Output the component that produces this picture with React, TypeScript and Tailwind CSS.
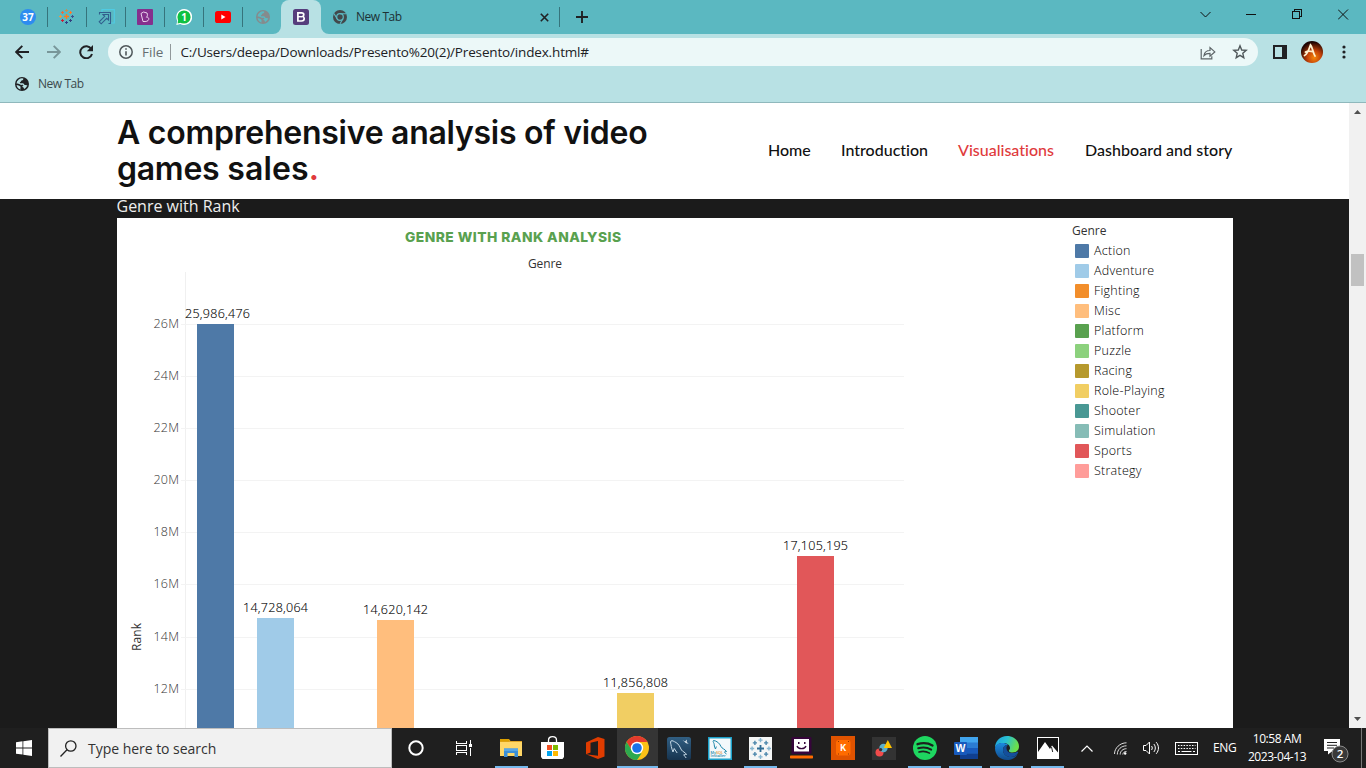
import type { ReactNode } from "react";

const UI = "font-['Open_Sans','Noto_Sans',sans-serif]";

/* ---------- browser icons ---------- */

const Globe = ({ color, bg }: { color: string; bg: string }) => (
  <svg width="14" height="14" viewBox="0 0 14 14">
    <circle cx="7" cy="7" r="7" fill={color} />
    <path d="M8.300 1.500c.2 1.300-.6 1.900-1.600 2.100-.9.2-.5 1.300-1.300 1.400-.7.1-.6.900-.3 1.200h2.600c1.300 0 1.200 1.700 2.300 1.700 1.300 0 1.600.5 2.300.2-.3 1.700-1.500 3.200-3.200 3.900-.5-.8-.2-1.600-1.100-1.700-.8-.1-.8-1.400 0-1.500.8-.2.5-.9-.4-1-.9 0-1.600.3-2.500-.2-1.300-.7-2-.9-3.600-1A5.600 5.600 0 0 1 8.300 1.500z" fill={bg} />
    <path d="M1.600 8c1.400 0 2.300.8 3.300 1.200.8.3.9 1.100.5 1.600-.3.400.2.900.4 1.700C3.500 12 1.800 10.200 1.600 8z" fill={bg} />
  </svg>
);

const MARK_POINTS: [number, number, number][] = [
  [7.5, 7.5, 2.5], [3.5, 3.5, 1.5], [11.5, 3.5, 1.5], [11.5, 11.5, 1.5], [3.5, 11.5, 1.5],
  [7.5, 1.5, 1.5], [13.5, 7.5, 1.5], [7.5, 13.5, 1.5], [1.5, 7.5, 1.5],
];
const MARK_COLOR = ["#ff7a1a", "#ef6a3a", "#ff7a2a", "#34407e", "#cc1f36", "#c98f50", "#41508c", "#2f3f86", "#f0983a"];
const MARK_MONO = ["#2f6d95", "#4a86ab", "#4a86ab", "#4a86ab", "#4a86ab", "#85b5cf", "#85b5cf", "#85b5cf", "#85b5cf"];

const TableauMark = ({ mono = false }: { mono?: boolean }) => (
  <svg width={mono ? 21 : 16} height={mono ? 21 : 16} viewBox={mono ? "0 0 15 15" : "0 0 16 16"}>
    {MARK_POINTS.map(([x, y, r], i) => (
      <path key={i} d={`M${x - r} ${y}H${x + r}M${x} ${y - r}V${y + r}`} stroke={(mono ? MARK_MONO : MARK_COLOR)[i]} strokeWidth={i === 0 ? 1.3 : 1} />
    ))}
  </svg>
);

const ChromeGray = () => (
  <svg width="14" height="14" viewBox="0 0 14 14">
    <circle cx="7" cy="7" r="7" fill="#42484b" />
    <circle cx="7" cy="7" r="3.300" fill="none" stroke="#5bb8c1" strokeWidth="1.200" />
    <path d="M7 3.700h6.200M4.100 8.700L1 3.600M9.900 8.700L7 13.800" stroke="#5bb8c1" strokeWidth="1.100" />
  </svg>
);

const pinned: ReactNode[] = [
  <svg width="16" height="16" viewBox="0 0 16 16">
    <circle cx="8" cy="8" r="8" fill="#2d8cf0" />
    <text x="8" y="11.500" fontSize="10" fontWeight="700" fill="#fff" textAnchor="middle" fontFamily="Open Sans">37</text>
  </svg>,
  <TableauMark />,
  <svg width="17" height="16" viewBox="0 0 17 16" fill="none">
    <path d="M4 3V.7h12.300v13.300H13" stroke="#4fcbe3" strokeWidth="1.200" />
    <path d="M1.500 5.500v-2h11v11h-2" stroke="#315f8d" strokeWidth="1.100" />
    <path d="M5 5.500h5.500V11L8.700 9.300l-5.500 5.500-2-2 5.500-5.500z" stroke="#315f8d" strokeWidth="1.100" />
  </svg>,
  <svg width="16" height="16" viewBox="0 0 16 16" fill="none">
    <rect width="16" height="16" rx="1" fill="#85308d" />
    <path d="M4 4.500L6 12.500c3 .3 5.200-.3 5.700-2 .4-1.500-.8-2.500-2.300-2.300 1.200-.9 1.300-2.700.6-4.200L6.500 3z" stroke="#ead3ee" strokeWidth="1" strokeLinejoin="round" />
  </svg>,
  <svg width="16" height="16" viewBox="0 0 16 16">
    <path d="M8 0a8 8 0 1 1-3.700 15L.3 16l1-4A8 8 0 0 1 8 0z" fill="#fff" />
    <circle cx="8" cy="8" r="6.600" fill="#0fc143" />
    <path d="M2.300 10.500L1.600 14.500l4-1z" fill="#0fc143" />
    <text x="8" y="11.600" fontSize="10" fontWeight="700" fill="#fff" textAnchor="middle" fontFamily="Open Sans">1</text>
  </svg>,
  <svg width="16" height="12" viewBox="0 0 16 12">
    <rect width="16" height="12" rx="2.600" fill="#f00" />
    <path d="M6.300 3.500v5L10.500 6z" fill="#fff" />
  </svg>,
  <Globe color="#858b8d" bg="#5bb8c1" />,
];

const TabStrip = () => (
  <div className="flex h-[34px] items-center bg-[#5bb8c1] pl-[9px]">
    {pinned.map((icon, i) => (
      <div key={i} className={`flex h-5 w-[39px] shrink-0 items-center justify-center ${i < 6 ? "border-r border-[#36747c]" : ""}`}>{icon}</div>
    ))}
    <div className="relative -ml-px flex h-[34px] w-10 items-center justify-center rounded-t-lg bg-[#b8e1e4]">
      <svg className="absolute bottom-0 -left-2" width="8" height="8"><path d="M8 0v8H0a8 8 0 0 0 8-8z" fill="#b8e1e4" /></svg>
      <svg className="absolute -right-2 bottom-0" width="8" height="8"><path d="M0 0v8h8a8 8 0 0 1-8-8z" fill="#b8e1e4" /></svg>
      <svg width="16" height="16" viewBox="0 0 16 16">
        <rect width="16" height="16" rx="2.500" fill="#563d7c" />
        <path d="M4.900 3.800h3.700c1.500 0 2.200.7 2.200 1.900 0 .9-.5 1.500-1.200 1.800 1 .2 1.600 1 1.600 2.100 0 1.500-1 2.400-2.700 2.400H4.900z" fill="none" stroke="#fff" strokeWidth="1.700" />
        <path d="M5 7.700h4" stroke="#fff" strokeWidth="1.400" />
      </svg>
    </div>
    <div className="flex h-5 w-[239px] items-center border-r border-[#36747c] pl-3">
      <ChromeGray />
      <span className={`${UI} ml-[9px] flex-1 text-[12px] tracking-[-0.45px] text-[#1d3135]`}>New Tab</span>
      <svg className="mr-[10px]" width="9" height="9" viewBox="0 0 9 9"><path d="M.8.8l7.400 7.400M8.200.8L.8 8.200" stroke="#202124" strokeWidth="1.600" /></svg>
    </div>
    <svg className="ml-[16px]" width="12" height="12" viewBox="0 0 12 12"><path d="M6 0v12M0 6h12" stroke="#202124" strokeWidth="1.900" /></svg>
    <div className="ml-auto flex h-[34px] pb-[6px]">
      <WinBtn><path d="M.5 3L5.500 8l5-5" /></WinBtn>
      <WinBtn><path d="M0 5.500h10" shapeRendering="crispEdges" /></WinBtn>
      <WinBtn><path d="M.5 2.500h7v7h-7zM2.500 2.500V.5h7v7H7.500" shapeRendering="crispEdges" /></WinBtn>
      <WinBtn><path d="M0 .5l10 10M10 .5l-10 10" /></WinBtn>
    </div>
  </div>
);

const WinBtn = ({ children }: { children: ReactNode }) => (
  <div className="flex w-[46px] items-center justify-center">
    <svg width="11" height="11" viewBox="0 0 11 11" fill="none" stroke="#111" strokeWidth="1">{children}</svg>
  </div>
);

const Toolbar = () => (
  <div className="flex h-9 items-center bg-[#b8e1e4] pl-[15px]">
    <svg width="14" height="14" viewBox="0 0 14 14" fill="none" stroke="#202124" strokeWidth="1.900"><path d="M14 7H1.500M7.300.8L1.200 7l6.100 6.200" /></svg>
    <svg className="ml-[18px]" width="14" height="14" viewBox="0 0 14 14" fill="none" stroke="#789699" strokeWidth="1.900"><path d="M0 7h12.500M6.700.8L12.800 7l-6.100 6.200" /></svg>
    <svg className="ml-[18px]" width="15" height="14" viewBox="0 0 15 14"><path d="M12.300 4A6 6 0 1 0 13 9" fill="none" stroke="#202124" strokeWidth="2" /><path d="M14 0v6.200H7.800z" fill="#202124" /></svg>
    <div className="ml-[14px] flex h-7 w-[1150px] items-center rounded-full bg-[#ecf8f8] pr-[10px] pl-[11px]">
      <svg width="14" height="14" viewBox="0 0 14 14"><circle cx="7" cy="7" r="6.200" fill="none" stroke="#50585b" strokeWidth="1.500" /><path d="M7 6.200v4.200M7 3.300v1.500" stroke="#50585b" strokeWidth="1.600" /></svg>
      <span className={`${UI} ml-[9px] text-[13.500px] text-[#666e71]`}>File</span>
      <span className="ml-[7px] h-4 w-px bg-[#91999b]" />
      <span className={`${UI} ml-[9px] flex-1 text-[13.500px] tracking-[-0.16px] whitespace-nowrap text-[#202124]`}>C:/Users/deepa/Downloads/Presento%20(2)/Presento/index.html#</span>
      <svg width="16" height="15" viewBox="0 0 16 15" fill="none" stroke="#5c6467" strokeWidth="1.200"><path d="M1.200 4v9.800h10.600v-2.500M4 10.500c.5-3.400 2.600-5 6-5V2.600l4.800 4.300-4.800 4.300V8.400c-2.700 0-4.500.4-6 2.100z" /></svg>
      <svg className="ml-4" width="16" height="16" viewBox="0 0 16 16" fill="none" stroke="#50585b" strokeWidth="1.400"><path d="M8 1.800l1.700 4.200 4.500.4-3.400 2.900 1 4.400L8 11.400l-3.800 2.300 1-4.400-3.400-2.900 4.500-.4z" /></svg>
    </div>
    <svg className="ml-[15px]" width="14" height="14" viewBox="0 0 14 14"><rect x="1" y="1" width="12" height="12" fill="none" stroke="#202124" strokeWidth="2" /><rect x="9" y="1" width="4" height="12" fill="#202124" /></svg>
    <svg className="ml-[14px]" width="22" height="22" viewBox="0 0 22 22">
      <defs><radialGradient id="flame" cx=".6" cy=".75" r=".7"><stop offset="0" stopColor="#f5870b" /><stop offset=".45" stopColor="#c44208" /><stop offset="1" stopColor="#1c0302" /></radialGradient></defs>
      <circle cx="11" cy="11" r="11" fill="url(#flame)" />
      <path d="M3.500 14.500c2.500-1 4.500-6 6-10.500 2 2 2.500 8 4.500 11M4.500 11c2.500-1.200 6-.7 8 0" fill="none" stroke="#fff0cf" strokeWidth="1.800" strokeLinecap="round" />
    </svg>
    <svg className="ml-[19px]" width="4" height="14" viewBox="0 0 4 14" fill="#202124"><circle cx="2" cy="2" r="1.600" /><circle cx="2" cy="7" r="1.600" /><circle cx="2" cy="12" r="1.600" /></svg>
  </div>
);

/* ---------- chart ---------- */

const ticks: [string, number][] = [["26M", 324], ["24M", 376], ["22M", 428], ["20M", 480], ["18M", 532], ["16M", 584], ["14M", 637], ["12M", 689]];
const bars: [string, number, number, string][] = [
  ["25,986,476", 197, 324, "#4e79a7"],
  ["14,728,064", 257, 618, "#a0cbe8"],
  ["14,620,142", 377, 620, "#ffbe7d"],
  ["11,856,808", 617, 693, "#f1ce63"],
  ["17,105,195", 797, 556, "#e15759"],
];
const genres: [string, string][] = [
  ["Action", "bg-[#4e79a7]"],
  ["Adventure", "bg-[#a0cbe8]"],
  ["Fighting", "bg-[#f28e2b]"],
  ["Misc", "bg-[#ffbe7d]"],
  ["Platform", "bg-[#59a14f]"],
  ["Puzzle", "bg-[#8cd17d]"],
  ["Racing", "bg-[#b6992d]"],
  ["Role-Playing", "bg-[#f1ce63]"],
  ["Shooter", "bg-[#499894]"],
  ["Simulation", "bg-[#86bcb6]"],
  ["Sports", "bg-[#e15759]"],
  ["Strategy", "bg-[#ff9d9a]"],
];

const Chart = () => (
  <svg width="950" height="510" viewBox="117 218 950 510" className="block shrink-0" fontFamily="Open Sans, Noto Sans, sans-serif">
    <text x="405" y="242" fontSize="13.800" fontWeight="800" fontFamily="Inter, sans-serif" fill="#59a14f" textLength="216">GENRE WITH RANK ANALYSIS</text>
    <text x="528" y="268" fontSize="12" fill="#333" textLength="34">Genre</text>
    <path d="M185.500 272V728" stroke="#f0f0f0" />
    {ticks.map(([label, y]) => (
      <g key={label}>
        <path d={`M181 ${y + 0.5}H904`} stroke="#f3f3f3" />
        <text x="153.500" y={y + 4} fontSize="12.500" fontWeight="300" fill="#333" textLength="25.500">{label}</text>
      </g>
    ))}
    {bars.map(([label, x, y, fill]) => (
      <g key={label}>
        <rect x={x} y={y} width="37" height={728 - y} fill={fill} />
        <text x={label === "25,986,476" ? 185 : x - 14} y={y - 6} fontSize="12.500" fontWeight="300" fill="#000" stroke="#000" strokeWidth=".12" textLength="65">{label}</text>
      </g>
    ))}
    <text transform="translate(141 651) rotate(-90)" fontSize="12" fill="#333" textLength="28">Rank</text>
  </svg>
);

const Page = () => (
  <div className="flex h-[625px]">
    <main className="flex w-[1349px] flex-col bg-[#1b1b1b]">
      <header className="flex h-24 items-center justify-between bg-white pr-[116px] pl-[117px]">
        <h1 className="w-[560px] font-['Inter',sans-serif] text-[32px] leading-9 font-semibold tracking-[-0.27px] text-[#111]">
          A comprehensive analysis of video<br />games <span className="tracking-[0.15px]">sales</span><span className="text-[#e03a3c]">.</span>
        </h1>
        <nav className="flex gap-[30px] pb-[2px] font-['Lato',sans-serif] text-[16px] font-medium whitespace-nowrap text-[#111] [font-variant-ligatures:none]">
          <a className="w-[43px]">Home</a>
          <a className="w-[87px]">Introduction</a>
          <a className="w-[97px] text-[#e03a3c]">Visualisations</a>
          <a className="w-[148px] tracking-[0.05px]">Dashboard and story</a>
        </nav>
      </header>
      <p className={`${UI} h-[19px] pl-[116.500px] text-[16px] leading-[15px] font-medium text-[#eee]`}>Genre with Rank</p>
      <section className="ml-[117px] flex h-[510px] w-[1116px] bg-white">
        <Chart />
        <aside className={`${UI} pt-[3px] pl-[5px] text-[12px] text-[#333]`}>
          <div className="h-5 leading-5">Genre</div>
          {genres.map(([name, color]) => (
            <div key={name} className="flex h-5 items-center pl-[3px]">
              <span className={`h-[14px] w-[14px] rounded-[1px] ${color}`} />
              <span className="ml-[5px] text-[12.500px] font-light tracking-[0.25px] whitespace-nowrap text-black">{name}</span>
            </div>
          ))}
        </aside>
      </section>
    </main>
    <div className="flex w-[17px] flex-col items-center bg-[#f1f1f1] py-[7px]">
      <svg width="7" height="4" viewBox="0 0 7 4"><path d="M3.500 0L7 4H0z" fill="#505050" /></svg>
      <div className="mt-[140px] h-8 w-[13px] bg-[#c1c1c1]" />
      <svg className="mt-auto" width="7" height="4" viewBox="0 0 7 4"><path d="M3.500 4L7 0H0z" fill="#505050" /></svg>
    </div>
  </div>
);

/* ---------- taskbar ---------- */

const Explorer = () => (
  <svg className="-ml-px" width="22" height="18" viewBox="0 0 22 18">
    <path d="M0 0h9l1.500 2H22v15H0z" fill="#e0a526" /><path d="M0 3h22v14H0z" fill="#ffd767" /><path d="M0 0h9v2.500H0z" fill="#dda000" />
    <path d="M4 9.500h14V18h-3.500v-4h-7v4H4z" fill="#3c8fd8" /><path d="M4 9.500h14V12H4z" fill="#58a7e6" />
  </svg>
);
const Store = () => (
  <svg className="-mt-px -ml-px" width="23" height="23" viewBox="0 0 23 23">
    <path d="M7.500 7V4.200C7.500-.5 15.500-.5 15.500 4.200V7" fill="none" stroke="#fff" strokeWidth="1.300" /><path d="M0 6h23v15l-1.500 2h-20L0 21z" fill="#fff" />
    <path d="M6 9h5v5H6z" fill="#f25022" /><path d="M12 9h5v5h-5z" fill="#7fba00" /><path d="M6 15h5v5H6z" fill="#00a4ef" /><path d="M12 15h5v5h-5z" fill="#ffb900" />
  </svg>
);
const Office = () => (
  <svg className="-ml-px" width="19" height="22" viewBox="0 0 19 22"><path d="M0 5.500L12 0l6.500 2v17.500L12 22 0 17.300l12 1.500V4L4.500 5.800v9.700L0 17.300z" fill="#e03c00" /></svg>
);
const Chrome = () => (
  <svg className="-ml-px" width="24" height="24" viewBox="0 0 24 24">
    <circle cx="12" cy="12" r="12" fill="#fbc116" />
    <path d="M1.600 6A12 12 0 0 1 22.400 6H12v6.500H5.400z" fill="#e33b2e" />
    <path d="M1.600 6L7.200 15 12 17.400h4.500L12 24A12 12 0 0 1 1.600 6z" fill="#2da94f" />
    <circle cx="12" cy="12" r="6.200" fill="#fff" /><circle cx="12" cy="12" r="4.800" fill="#1a73e8" />
  </svg>
);
const Workbench = () => (
  <svg width="24" height="23" viewBox="0 0 24 23" fill="none">
    <defs><linearGradient id="wb" x2="0" y2="1"><stop stopColor="#315f83" /><stop offset="1" stopColor="#17344f" /></linearGradient></defs>
    <rect width="24" height="23" rx="2.500" fill="url(#wb)" />
    <path d="M6 15c-1-2-1-3.500-1.700-5.500C4 7 3 5 4 4s3 .5 5 1.500c3 1.500 4 5 5.500 7.500 1 1.800 4 2.300 5 4.500-1.500 0-2.500 0-2.800.3.5 1.200 2 2 2.500 3.200M6 15l1.200-3.500 3 4.500" stroke="#c7dae7" strokeWidth="1" /><path d="M15.500 3l2.500 1.500L20 2.500l-.3 2.500 2 1.800-2.600-.600z" fill="#dce6ed" />
  </svg>
);
const Installer = () => (
  <svg width="24" height="23" viewBox="0 0 24 23" fill="none">
    <rect width="24" height="23" fill="#1ba0c9" /><rect x="1.500" y="1.500" width="21" height="20" fill="#f3f9fb" />
    <path d="M7.500 12c-1.500-2-1-4-1.500-5.500C5.500 5 4.500 4 5.500 3.500c3 .3 6 2.500 7.500 6 1 2.300 4 2.500 5.500 5-1.500 0-2 .2-2 .8l2 1.700M7.500 12l.8-2.500" stroke="#1684a8" strokeWidth="1" />
    <text x="2.500" y="16.800" fontSize="3.800" fontWeight="600" fill="#1684a8" fontFamily="Open Sans">My<tspan fill="#e98f1e">SQL</tspan></text>
    <text x="2.500" y="20.300" fontSize="3.800" fontWeight="600" fill="#1684a8" fontFamily="Open Sans">Installer</text>
  </svg>
);
const Tableau = () => (
  <div className="-ml-px flex h-[23px] w-[23px] items-center justify-center bg-[#f4f6f6]"><TableauMark mono /></div>
);
const Laptop = () => (
  <svg width="23" height="22" viewBox="0 0 23 22">
    <rect x="1.500" width="20" height="17" rx="1" fill="#36053b" /><rect x="4" y="2" width="15" height="12.500" fill="#fff" />
    <path d="M8 5h1.500v2H8zM14 5h1.500v2H14z" fill="#36053b" /><path d="M7 9c1 3.500 8 3.500 9 0" fill="none" stroke="#36053b" strokeWidth="1.300" /><rect y="18.500" width="23" height="3" rx=".7" fill="#ff6b00" />
  </svg>
);
const Kicad = () => (
  <svg width="24" height="24" viewBox="0 0 24 24">
    <rect width="24" height="24" fill="#e05300" /><rect x="5" y="4" width="14.500" height="15.500" rx="2.500" fill="#ff6b00" />
    <path d="M7 5.500h1M17 5.500h1M7 18h1M17 18h1" stroke="#8f3700" />
    <text x="12.300" y="15.200" fontSize="8.500" fontWeight="700" fill="#fff" textAnchor="middle" fontFamily="Inter">K</text>
  </svg>
);
const Shapes = () => (
  <svg width="24" height="23" viewBox="0 0 24 23">
    <rect width="24" height="23" fill="#333" />
    <circle cx="7.500" cy="15.500" r="4" fill="#f04b4b" />
    <circle cx="11.500" cy="11" r="4.200" fill="#5aafcc" />
    <circle cx="8.600" cy="12.600" r="1.700" fill="#333" />
    <path d="M15.800 3l4.200 8h-8.300z" fill="#ffc400" />
  </svg>
);
const Spotify = () => (
  <svg width="24" height="24" viewBox="0 0 24 24" fill="none" stroke="#1c211d" strokeLinecap="round">
    <circle cx="12" cy="12" r="12" fill="#1ed760" stroke="none" /><path d="M4.500 8.200c5-1.500 11-1 15 1.300" strokeWidth="2.300" /><path d="M5.200 12.300c4.500-1.300 9.500-.7 13 1.300" strokeWidth="2" /><path d="M6 16c4-1.100 7.500-.6 10.500 1.100" strokeWidth="1.600" />
  </svg>
);
const Word = () => (
  <svg width="24" height="22" viewBox="0 0 24 22">
    <rect x="6" width="18" height="22" rx="1.500" fill="#2b7cd3" /><path d="M6 0h18v5.500H6z" fill="#41a5ee" /><path d="M6 11h18v5.500H6z" fill="#185abd" /><path d="M6 16.500h18V22H6z" fill="#103f91" />
    <rect y="5" width="13" height="13" rx="1" fill="#185abd" />
    <text x="6.500" y="15.200" fontSize="10.500" fontWeight="700" fill="#fff" textAnchor="middle" fontFamily="Liberation Sans">W</text>
  </svg>
);
const Edge = () => (
  <svg width="24" height="24" viewBox="0 0 24 24">
    <defs><linearGradient id="eg" x1="0" x2="1" y2=".3"><stop stopColor="#1c9fe0" /><stop offset=".5" stopColor="#29c0d3" /><stop offset="1" stopColor="#6be04b" /></linearGradient>
      <linearGradient id="eb" x2="0" y2="1"><stop stopColor="#1b8ade" /><stop offset="1" stopColor="#114a8b" /></linearGradient></defs>
    <path d="M0 12C0 5 5 0 12 0s12 5 12 10.500c0 4-3 6-6.500 6-3 0-4-1.300-3.500-2.300 1-1 1-1.700 1-2.200 0-3-3-5-7-5-4 0-7 2-8 5z" fill="url(#eg)" />
    <path d="M0 12c1-4 4-5 7.500-5 2 0 4 .5 5.500 2-3-.5-5 2-5 5 0 4.500 4 7 8 7 2.500 0 4.500-.7 6.500-2.500C20.500 22 16.500 24 12 24 5 24 0 19 0 12z" fill="url(#eb)" />
    <path d="M8 14c0-3.500 2-5.300 5-5-1.500 1-2 3-1 5.200 1.300 3 6.500 3.800 10 1.800 1-.5 1.500 0 1 1-2 3-4.500 4-7 4-4 0-8-2.500-8-7z" fill="#144f9b" />
  </svg>
);
const Photos = () => (
  <svg width="22" height="22" viewBox="0 0 22 22"><rect x=".5" y=".5" width="21" height="21" fill="#151515" stroke="#fff" /><path d="M1 15l7-10 5 7 2-3.500 6 7V21H1z" fill="#fff" /><path d="M14.500 10l1.200 5" stroke="#222" /></svg>
);

const apps: { icon: ReactNode; w: string; open?: boolean; active?: boolean }[] = [
  { icon: <Explorer />, w: "w-[41px]", open: true },
  { icon: <Store />, w: "w-[42px]" },
  { icon: <Office />, w: "w-[43px]" },
  { icon: <Chrome />, w: "w-[41px]", open: true, active: true },
  { icon: <Workbench />, w: "w-[41px]" },
  { icon: <Installer />, w: "w-[41px]" },
  { icon: <Tableau />, w: "w-[41px]", open: true },
  { icon: <Laptop />, w: "w-[41px]" },
  { icon: <Kicad />, w: "w-[41px]" },
  { icon: <Shapes />, w: "w-[41px]" },
  { icon: <Spotify />, w: "w-[41px]", open: true },
  { icon: <Word />, w: "w-[41px]", open: true },
  { icon: <Edge />, w: "w-[41px]", open: true },
  { icon: <Photos />, w: "w-[41px]", open: true },
];

const Taskbar = () => (
  <div className={`${UI} flex h-10 items-center bg-[#1f1f1f]`}>
    <div className="flex w-12 justify-center">
      <svg width="16" height="16" viewBox="0 0 16 16" fill="#fff"><path d="M0 2.200L6.500 1.300v6.200H0zM7.300 1.200L16 0v7.500H7.300zM0 8.400h6.500v6.200L0 13.700zM7.300 8.400H16V16l-8.700-1.200z" /></svg>
    </div>
    <div className="flex h-10 w-[344px] items-center border border-[#bdbdbd] bg-[#f1f1f1] pl-[11px]">
      <svg width="17" height="17" viewBox="0 0 17 17" fill="none" stroke="#222" strokeWidth="1.300"><circle cx="10.800" cy="6" r="5.200" /><path d="M7 9.800L.5 16.500" /></svg>
      <span className="ml-[11px] text-[14px] tracking-[-0.03px] text-[#333]">Type here to search</span>
    </div>
    <div className="flex w-12 justify-center"><svg width="16" height="16" viewBox="0 0 16 16"><circle cx="8" cy="8" r="6.700" fill="none" stroke="#fff" strokeWidth="2" /></svg></div>
    <div className="flex w-[47px] justify-center">
      <svg width="16" height="16" viewBox="0 0 16 16" fill="none" stroke="#fff"><path d="M.5 1v2.500h10V1M.5 15v-2.500h10V15M.5 5.500h10v5H.5zM14.500 0v3.500M14.500 8v8" shapeRendering="crispEdges" /><path d="M13 4h3v3h-3z" fill="#fff" stroke="none" /></svg>
    </div>
    <div className="ml-1 flex">
      {apps.map((a, i) => (
        <div key={i} className={`flex h-10 flex-col items-center ${a.w} ${a.active ? "bg-[#353535]" : ""}`}>
          <div className="flex flex-1 items-center pt-[2px]">{a.icon}</div>
          <div className={`h-[2px] ${a.active ? "w-full" : "w-[33px]"} ${a.open ? "bg-[#76b9ed]" : ""}`} />
        </div>
      ))}
    </div>
    <svg className="ml-[13px]" width="12" height="7" viewBox="0 0 12 7" fill="none" stroke="#fff" strokeWidth="1.200"><path d="M.5 6.500L6 1l5.500 5.500" /></svg>
    <svg className="ml-[21px]" width="13" height="13" viewBox="0 0 13 13" fill="none" stroke="#ddd" strokeWidth="1"><path d="M.5 12C.5 6 6 .8 12.500.8M3.300 12.500c0-5 4-8.700 9.200-8.700M6.200 12.500c0-3.500 2.800-5.800 6.300-5.800" /><path d="M8.800 12.500c.2-2 1.700-3 3.700-3" /><circle cx="11.200" cy="11.500" r="1.200" fill="#fff" stroke="none" /></svg>
    <svg className="ml-[16px]" width="17" height="14" viewBox="0 0 17 14" fill="none" stroke="#fff" strokeWidth="1"><path d="M.5 4.500H3L6.500 1v12L3 9.500H.5zM8.500 5c1 1.200 1 2.800 0 4M10.800 3c2 2.300 2 5.700 0 8M13.200 1.200c3 3.500 3 8.100 0 11.600" /></svg>
    <svg className="ml-[15px]" width="23" height="13" viewBox="0 0 23 13" fill="none" stroke="#fff" strokeWidth="1"><rect x=".5" y=".5" width="22" height="12" /><path d="M3 3.500h17.500M3 6.500h17.500" strokeDasharray="1.500 1.300" /><path d="M3 9.500h2M6.500 9.500h10M18 9.500h2" /></svg>
    <span className="ml-[15px] w-[24px] text-[12px] tracking-[-0.3px] text-white">ENG</span>
    <div className="ml-[10px] w-[60px] text-center text-[12px] leading-[18px] tracking-[-0.45px] whitespace-nowrap text-white"><div>10:58 AM</div><div>2023-04-13</div></div>
    <svg className="mt-[5px] ml-[17px]" width="25" height="25" viewBox="0 0 25 25">
      <path d="M0 1h16v12H8.500L4 16.500V13H0z" fill="#fff" /><path d="M3 4.500h10M3 7.300h10M3 10h7" stroke="#222" />
      <circle cx="16" cy="16" r="8" fill="#393939" stroke="#8a8a8a" />
      <text x="16" y="20.200" fontSize="11.500" fontWeight="600" fill="#fff" textAnchor="middle" fontFamily="Open Sans">2</text>
    </svg>
    <div className="mr-1 ml-auto h-10 w-px bg-[#777]" />
  </div>
);

export default function App() {
  return (
    <div className="flex h-[768px] w-[1366px] flex-col overflow-hidden bg-white">
      <TabStrip />
      <Toolbar />
      <div className="flex h-[33px] items-center border-b border-[#8fb8bc] bg-[#b8e1e4] pb-1 pl-[15px]">
        <Globe color="#202124" bg="#b8e1e4" />
        <span className={`${UI} ml-[9px] text-[12px] tracking-[-0.45px] text-[#3c4a4d]`}>New Tab</span>
      </div>
      <Page />
      <Taskbar />
    </div>
  );
}
